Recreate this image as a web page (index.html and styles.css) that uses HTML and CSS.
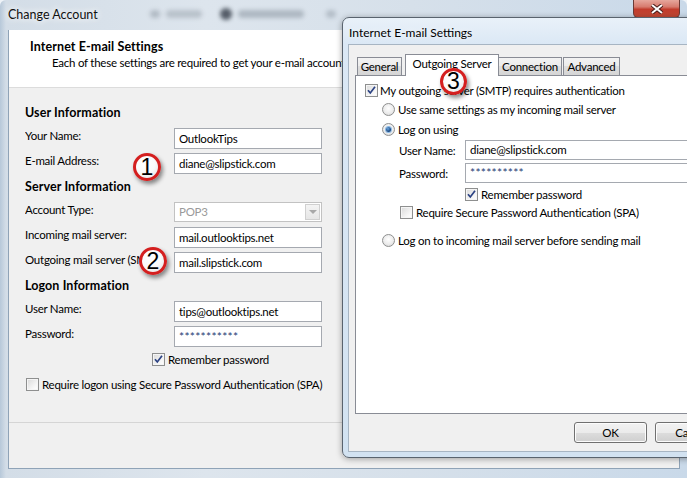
FILE: index.html
```html
<!DOCTYPE html>
<html>
<head>
<meta charset="utf-8">
<title>Change Account</title>
<link rel="stylesheet" href="styles.css">
</head>
<body>
<div class="win">
  <div class="win-title">
    <span class="title-text">Change Account</span>
    <span class="blob blob-a"></span>
    <span class="blob blob-b"></span>
    <span class="blob blob-c"></span>
    <span class="blob blob-d"></span>
    <span class="blob blob-e"></span>
    <span class="close"><svg width="14" height="10" viewBox="0 0 14 10"><path d="M2 1l10 8M12 1L2 9" stroke="#4a1e1a" stroke-width="4"/><path d="M2 1l10 8M12 1L2 9" stroke="#fff" stroke-width="2"/></svg></span>
  </div>
  <div class="client">
    <div class="hdr">
      <div class="hdr-title">Internet E-mail Settings</div>
      <div class="hdr-sub">Each of these settings are required to get your e-mail account working.</div>
    </div>
    <div class="form">
      <div class="sect">User Information</div>
      <div class="row"><span class="lbl">Your Name:</span><span class="inp">OutlookTips</span></div>
      <div class="row"><span class="lbl">E-mail Address:</span><span class="inp">diane@slipstick.com</span></div>
      <div class="sect">Server Information</div>
      <div class="row"><span class="lbl">Account Type:</span><span class="inp sel"><span class="sel-val">POP3</span><span class="sel-btn"></span></span></div>
      <div class="row"><span class="lbl">Incoming mail server:</span><span class="inp">mail.outlooktips.net</span></div>
      <div class="row"><span class="lbl lbl-clip">Outgoing mail server (SMTP):</span><span class="inp">mail.slipstick.com</span></div>
      <div class="sect">Logon Information</div>
      <div class="row"><span class="lbl">User Name:</span><span class="inp">tips@outlooktips.net</span></div>
      <div class="row"><span class="lbl">Password:</span><span class="inp pw">***********</span></div>
      <div class="chk-row remember"><span class="cb"><svg width="11" height="11" viewBox="0 0 11 11"><path d="M2 5.2L4.3 8L9 1.8" fill="none" stroke="#2b4283" stroke-width="1.7"/></svg></span><span>Remember password</span></div>
      <div class="chk-row spa"><span class="cb"></span><span>Require logon using Secure Password Authentication (SPA)</span></div>
    </div>
    <div class="foot"></div>
  </div>
</div>

<div class="dlg">
  <div class="dlg-title">Internet E-mail Settings</div>
  <div class="dlg-client">
    <div class="tabs">
      <span class="tab t-gen">General</span>
      <span class="tab t-out">Outgoing Server</span>
      <span class="tab t-con">Connection</span>
      <span class="tab t-adv">Advanced</span>
    </div>
    <div class="panel">
      <div class="chk-row"><span class="cb"><svg width="11" height="11" viewBox="0 0 11 11"><path d="M2 5.2L4.3 8L9 1.8" fill="none" stroke="#2b4283" stroke-width="1.7"/></svg></span><span>My outgoing server (SMTP) requires authentication</span></div>
      <div class="rd-row r1"><span class="rd"></span><span>Use same settings as my incoming mail server</span></div>
      <div class="rd-row r2"><span class="rd on"></span><span>Log on using</span></div>
      <div class="f-row f1"><span class="f-lbl">User Name:</span><span class="f-inp">diane@slipstick.com</span></div>
      <div class="f-row f2"><span class="f-lbl">Password:</span><span class="f-inp pw">**********</span></div>
      <div class="chk-row p-rem"><span class="cb"><svg width="11" height="11" viewBox="0 0 11 11"><path d="M2 5.2L4.3 8L9 1.8" fill="none" stroke="#2b4283" stroke-width="1.7"/></svg></span><span>Remember password</span></div>
      <div class="chk-row p-spa"><span class="cb"></span><span>Require Secure Password Authentication (SPA)</span></div>
      <div class="rd-row r3"><span class="rd"></span><span>Log on to incoming mail server before sending mail</span></div>
    </div>
    <div class="btns"><span class="btn">OK</span><span class="btn">Cancel</span></div>
  </div>
</div>

<span class="badge b1">1</span>
<span class="badge b2">2</span>
<span class="badge b3">3</span>
</body>
</html>
```

FILE: styles.css
```css
* { box-sizing: border-box; margin: 0; padding: 0; }
html, body { width: 687px; height: 478px; overflow: hidden; }
body {
  position: relative;
  font-family: Lato, "Open Sans", sans-serif;
  font-size: 11.5px;
  letter-spacing: -0.25px;
  color: #000;
  background: #eef3f8;
}

/* outer window */
.win {
  width: 687px;
  height: 478px;
  display: flex;
  flex-direction: column;
  border-radius: 6px 6px 0 0;
  background: linear-gradient(90deg, #b7c8d9 0, #d3dde7 6px, #dde5ed 30%, #d6e0ea 60%, #c9d9e9 100%);
}
.win-title {
  height: 30px;
  display: flex;
  align-items: center;
  padding-left: 8px;
  padding-bottom: 2px;
}
.title-text {
  font-size: 12.5px;
  letter-spacing: 0;
  color: #111;
  text-shadow: 0 0 6px #fff, 0 0 10px #fff;
}
.blob {
  height: 8px;
  border-radius: 4px;
  filter: blur(2px);
  align-self: center;
}
.blob-a { width: 10px; margin-left: 52px; background: #b2bbc5; }
.blob-b { width: 36px; margin-left: 6px; background: #b9c2cb; }
.blob-c { width: 12px; height: 12px; border-radius: 50%; margin-left: 18px; background: #555d68; }
.blob-d { width: 66px; margin-left: 6px; background: #aeb8c2; }
.blob-e { width: 10px; margin-left: 22px; background: #b4bec8; }
.close {
  margin-left: auto;
  margin-right: 7px;
  align-self: flex-start;
  width: 47px;
  height: 18px;
  border: 1px solid #6b3a36;
  border-top: none;
  border-radius: 0 0 5px 5px;
  background: linear-gradient(#e6a79c 0, #d77b6e 40%, #c13c2c 55%, #c54a36 100%);
  display: flex;
  align-items: center;
  justify-content: center;
}
.close svg { display: block; }

.client {
  flex: 1;
  margin: 0 7px 9px 8px;
  background: #f0f0f0;
  border: 1px solid #8fa3b7;
  border-top: none;
  display: flex;
  flex-direction: column;
}
.hdr {
  height: 58px;
  background: #fff;
  border-bottom: 1px solid #dcdcdc;
  padding: 9px 0 0 21px;
}
.hdr-title { font-weight: bold; line-height: 16px; font-size: 12.5px; letter-spacing: 0.1px; }
.hdr-sub { line-height: 15px; padding-left: 22px; white-space: nowrap; }

.form {
  flex: 1;
  padding: 16px 0 0 16px;
}
.sect { height: 24px; line-height: 18px; font-weight: bold; font-size: 12.5px; letter-spacing: 0.1px; }
.row { display: flex; height: 25px; }
.lbl { width: 149px; line-height: 16px; white-space: nowrap; overflow: hidden; }
.lbl-clip { width: 144px; margin-right: 5px; }
.inp {
  width: 148px;
  height: 21px;
  border: 1px solid #a5a9b0;
  background: #fff;
  padding: 0 4px;
  line-height: 19px;
  white-space: nowrap;
}
.inp.sel {
  height: 20px;
  border-color: #c2c2c2;
  color: #9a9a9a;
  display: flex;
  align-items: center;
  padding-right: 1px;
}
.sel-val { flex: 1; line-height: 18px; }
.sel-btn {
  width: 15px;
  height: 16px;
  border: 1px solid #d0d0d0;
  background: linear-gradient(#f4f4f4, #e6e6e6);
  display: flex;
  align-items: center;
  justify-content: center;
}
.sel-btn::after {
  content: "";
  border-left: 4px solid transparent;
  border-right: 4px solid transparent;
  border-top: 4px solid #a8a8a8;
}
.pw { color: #1f3c74; letter-spacing: 0.3px; font-size: 12px; }

.chk-row { display: flex; align-items: center; height: 16px; gap: 3px; white-space: nowrap; }
.remember { padding-left: 127px; }
.spa { padding-left: 1px; margin-top: 9px; }

.cb {
  width: 13px;
  height: 13px;
  flex: none;
  border: 1px solid #8e8f8f;
  background: linear-gradient(135deg, #d9d9d9, #f7f7f7 70%, #fff);
  box-shadow: inset 0 0 0 1px #f5f5f5;
  display: flex;
}
.cb svg { display: block; }

.foot { height: 46px; border-top: 1px solid #d5d5d5; }

/* inner dialog */
.dlg {
  position: absolute;
  left: 342px;
  top: 17px;
  width: 400px;
  height: 441px;
  border: 1px solid #59636e;
  border-radius: 7px 7px 0 7px;
  background: linear-gradient(#e9f1f9 0, #dbe8f5 26px, #d2e2f1 100%);
  box-shadow: 0 1px 6px rgba(0, 0, 0, 0.35);
  display: flex;
  flex-direction: column;
  z-index: 2;
}
.dlg-title {
  height: 26px;
  padding: 6px 0 0 6px;
  line-height: 18px;
  font-size: 12px;
  letter-spacing: 0;
  white-space: nowrap;
  text-shadow: 0 0 6px #fff;
}
.dlg-client {
  flex: 1;
  margin: 0 5px 5px 5px;
  background: #f0f0f0;
  border: 1px solid #a7b5c3;
  display: flex;
  flex-direction: column;
}
.tabs {
  height: 30px;
  padding-left: 8px;
  display: flex;
  align-items: flex-end;
}
.tab {
  height: 18px;
  border: 1px solid #898c95;
  border-bottom: none;
  background: linear-gradient(#f3f3f3, #ebebeb 50%, #dedede 50%, #d5d5d5);
  display: flex;
  align-items: center;
  justify-content: center;
  white-space: nowrap;
  line-height: 16px;
}
.t-gen { width: 45px; }
.t-out {
  width: 94px;
  height: 22px;
  margin-left: 3px;
  margin-bottom: -1px;
  background: #fff;
  position: relative;
  z-index: 1;
  padding-bottom: 4px;
}
.t-con { width: 64px; margin-left: -1px; }
.t-adv { width: 57px; margin-left: 1px; }

.panel {
  height: 339px;
  margin: 0 7px 0 6px;
  border: 1px solid #898c95;
  background: #fff;
  padding: 6px 0 0 9px;
}
.panel .chk-row { gap: 2px; }
.rd-row { display: flex; align-items: center; height: 16px; gap: 3px; white-space: nowrap; margin-left: 17px; }
.r1 { margin-top: 3px; }
.r2 { margin-top: 4px; }
.r3 { margin-top: 12px; }
.rd {
  width: 13px;
  height: 13px;
  flex: none;
  border-radius: 50%;
  border: 1px solid #8e8f8f;
  background: radial-gradient(circle at 50% 40%, #fff 0, #ececec 55%, #d2d2d2 100%);
  display: flex;
  align-items: center;
  justify-content: center;
}
.rd.on::after {
  content: "";
  width: 5px;
  height: 5px;
  border-radius: 50%;
  background: radial-gradient(circle at 40% 35%, #6aa6e0 0, #1b4c87 60%, #0c2447 100%);
  box-shadow: 0 0 0 1px #8ab8e4;
}
.f-row { display: flex; align-items: center; height: 20px; margin-left: 34px; margin-top: 3px; }
.f-lbl { width: 66px; white-space: nowrap; }
.f-inp {
  width: 260px;
  height: 20px;
  border: 1px solid #a5a9b0;
  background: #fff;
  padding: 0 4px;
  line-height: 18px;
  white-space: nowrap;
}
.panel .p-rem { margin-left: 100px; margin-top: 3px; gap: 3px; }
.panel .p-spa { margin-left: 35px; margin-top: 2px; gap: 3px; }

.btns {
  margin-top: 8px;
  padding-right: 7px;
  display: flex;
  justify-content: flex-end;
  gap: 8px;
}
.btn {
  width: 73px;
  height: 21px;
  border: 1px solid #707070;
  border-radius: 3px;
  background: linear-gradient(#f2f2f2 0, #ebebeb 50%, #dddddd 50%, #cfcfcf 100%);
  box-shadow: inset 0 0 0 1px #fcfcfc;
  display: flex;
  align-items: center;
  justify-content: center;
  line-height: 16px;
}

/* number callouts */
.badge {
  position: absolute;
  width: 28px;
  height: 28px;
  border-radius: 50%;
  border: 3px solid #d41f1f;
  background: radial-gradient(circle at 40% 35%, #fff 0, #fafafa 50%, #dedede 100%);
  box-shadow: 2px 3px 4px rgba(0, 0, 0, 0.45);
  font-family: "Liberation Sans", Arial, sans-serif;
  font-size: 23px;
  letter-spacing: 0;
  line-height: 22px;
  text-align: center;
  color: #000;
  z-index: 5;
}
.b1 { left: 133px; top: 153px; }
.b2 { left: 139px; top: 247px; }
.b3 { left: 440px; top: 68px; width: 27px; height: 27px; line-height: 21px; }
```
